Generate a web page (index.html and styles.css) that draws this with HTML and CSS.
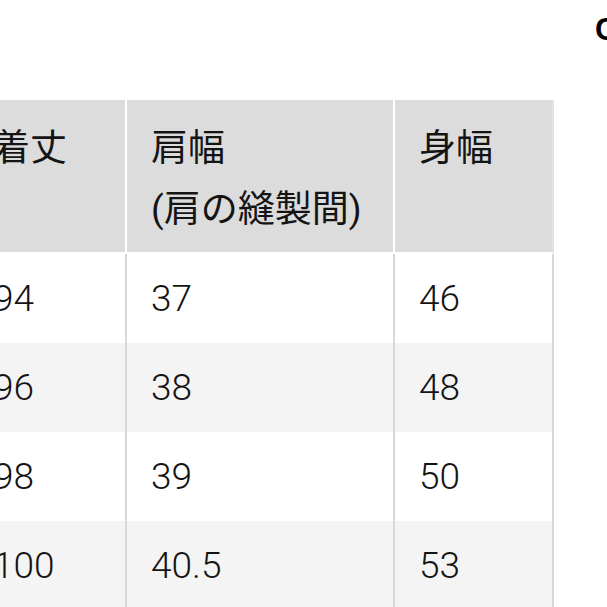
FILE: index.html
```html
<!DOCTYPE html>
<html lang="ja">
<head>
<meta charset="utf-8">
<title>サイズ表</title>
<link rel="stylesheet" href="styles.css">
</head>
<body>
<div class="page">
  <div class="title">C</div>
  <table class="size-table">
    <thead>
      <tr>
        <th class="col1">着丈</th>
        <th class="col2">肩幅<br>(肩の縫製間)</th>
        <th class="col3">身幅</th>
      </tr>
    </thead>
    <tbody>
      <tr><td>94</td><td>37</td><td>46</td></tr>
      <tr><td>96</td><td>38</td><td>48</td></tr>
      <tr><td>98</td><td>39</td><td>50</td></tr>
      <tr><td>100</td><td>40.5</td><td>53</td></tr>
    </tbody>
  </table>
</div>
</body>
</html>
```
FILE: styles.css
```css
html, body {
  margin: 0;
  padding: 0;
  background: #fff;
}
.page {
  width: 607px;
  height: 607px;
  overflow: hidden;
}
.title {
  height: 100px;
  box-sizing: border-box;
  padding: 12px 0 0 595px;
  font-family: "Liberation Sans", Arial, sans-serif;
  font-weight: bold;
  font-size: 31px;
  line-height: 36px;
  color: #000;
  white-space: nowrap;
}
.size-table {
  margin-left: -31px;
  border-collapse: separate;
  border-spacing: 0;
  table-layout: fixed;
  width: 585px;
  font-family: Roboto, "Noto Sans CJK JP", sans-serif;
  font-size: 36px;
  color: #141414;
}
.size-table .col1 { width: 158px; }
.size-table .col2 { width: 268px; }
.size-table .col3 { width: 159px; }
.size-table th {
  box-sizing: border-box;
  height: 154px;
  background: #dcdcdc;
  font-weight: 400;
  font-size: 37px;
  text-align: left;
  vertical-align: top;
  line-height: 61px;
  padding: 18px 0 0 24px;
  border-right: 2px solid #fff;
  border-bottom: 2px solid #fff;
  white-space: nowrap;
}
.size-table th.col3 {
  border-right-color: #e2e2e2;
}
.size-table td {
  box-sizing: border-box;
  height: 89px;
  padding: 0 0 0 24px;
  line-height: 40px;
  font-weight: 300;
  font-size: 37px;
  vertical-align: middle;
  border-right: 2px solid #d8d8d8;
}
.size-table tbody tr:nth-child(odd) td { background: #fff; }
.size-table tbody tr:nth-child(even) td { background: #f4f4f4; }
```
